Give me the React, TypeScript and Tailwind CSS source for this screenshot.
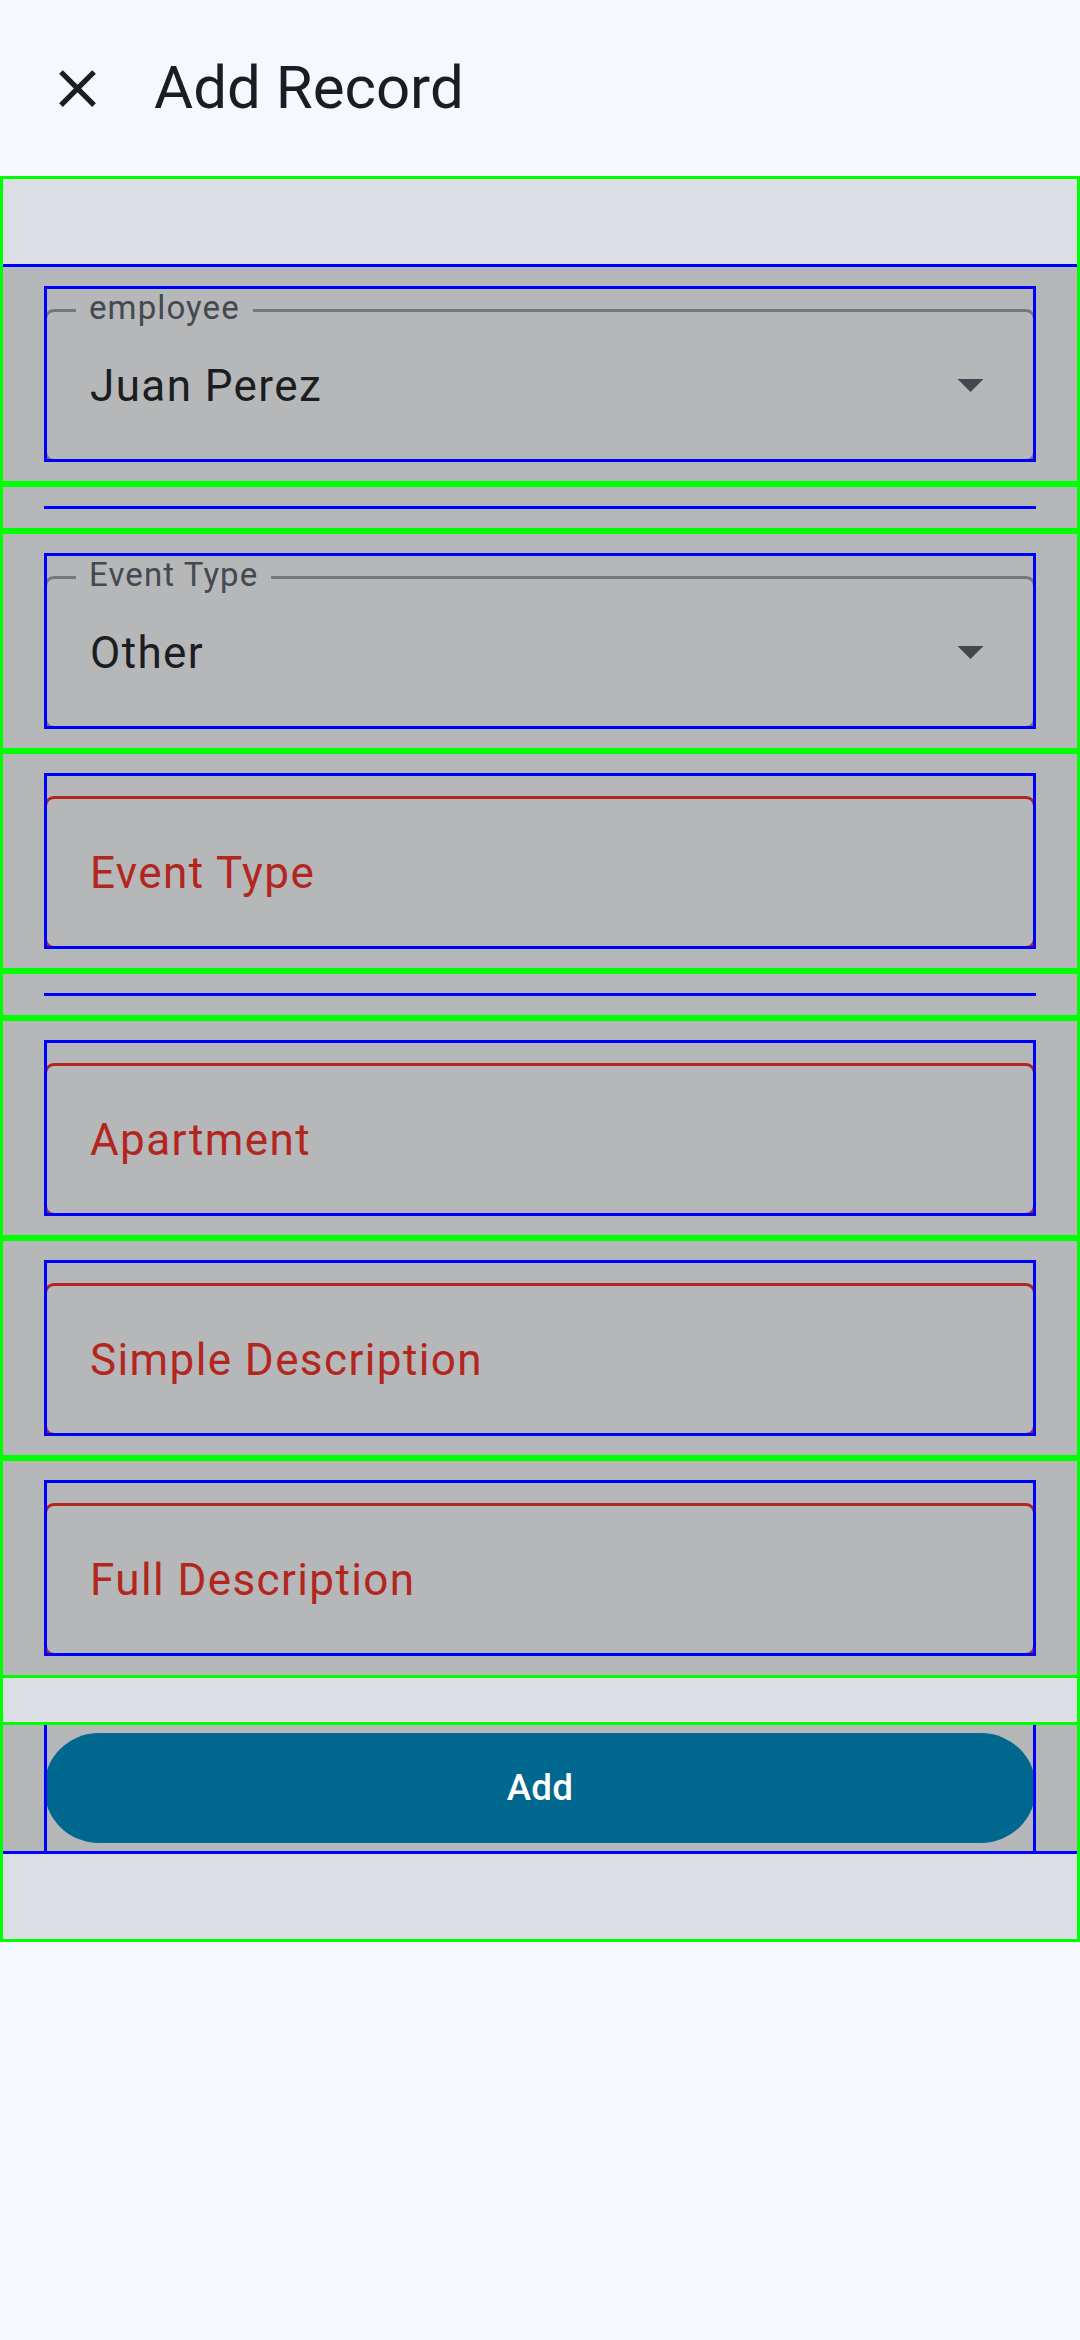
import React from 'react';

function CloseIcon() {
  return (
    <svg viewBox="0 0 24 24" className="h-[63px] w-[63px]" fill="#1b1d21">
      <path d="M19 6.41L17.59 5 12 10.59 6.41 5 5 6.41 10.59 12 5 17.59 6.41 19 12 13.41 17.59 19 19 17.59 13.41 12z" />
    </svg>
  );
}

function OutlinedSelect({ label, value }: { label: string; value: string }) {
  return (
    <div className="relative flex h-[153px] items-center rounded-[10px] border-[3px] border-[#74777c] pl-[43px] pr-[49px]">
      <span className="absolute -top-[21px] left-[29px] bg-[#b6b7b9] px-[13px] text-[33px] leading-none tracking-[1.1px] text-[#44494f]">
        {label}
      </span>
      <span className="flex-1 text-[44px] leading-none tracking-[1.4px] text-[#1b1d20]">{value}</span>
      {/* dropdown arrow */}
      <svg viewBox="0 0 10 5" className="h-[13px] w-[27px]">
        <path d="M0 0l5 5 5-5z" fill="#44474d" />
      </svg>
    </div>
  );
}

function ErrorField({ label }: { label: string }) {
  return (
    <div className="flex h-[153px] items-center rounded-[10px] border-[3px] border-[#b3261e] pl-[43px]">
      <span className="text-[44px] leading-none tracking-[1.4px] text-[#b3261e]">{label}</span>
    </div>
  );
}

// blue debug outline drawn over the field
function Slot({ children }: { children: React.ReactNode }) {
  return (
    <div className="relative pt-[23px]">
      {children}
      <div className="pointer-events-none absolute inset-0 border-[3px] border-[#0000ff]" />
    </div>
  );
}

function Row({ first = false, children }: { first?: boolean; children: React.ReactNode }) {
  return (
    <div
      className={
        first
          ? 'border-b-[3px] border-[#00ff00] bg-[#b6b7b9] px-[41px] py-[19px]'
          : 'border-y-[3px] border-[#00ff00] bg-[#b6b7b9] px-[41px] py-[19px]'
      }
    >
      {children}
    </div>
  );
}

function DividerRow() {
  return (
    <div className="border-y-[3px] border-[#00ff00] bg-[#b6b7b9] px-[41px] py-[19px]">
      <div className="h-[3px] bg-[#0000ff]" />
    </div>
  );
}

export default function App() {
  return (
    <div className="min-h-[2340px] w-[1080px] bg-[#f5f8fe] font-['Roboto',sans-serif]">
      {/* Top bar */}
      <header className="flex h-[176px] items-center">
        <div className="ml-[46px]">
          <CloseIcon />
        </div>
        <h1 className="ml-[45px] text-[60px] leading-none text-[#1b1d21]">Add Record</h1>
      </header>

      {/* Form */}
      <div className="border-[3px] border-[#00ff00] bg-[#dbdee2] py-[85px]">
        <div className="border-y-[3px] border-[#0000ff]">
          <Row first>
            <Slot>
              <OutlinedSelect label="employee" value="Juan Perez" />
            </Slot>
          </Row>
          <DividerRow />
          <Row>
            <Slot>
              <OutlinedSelect label="Event Type" value="Other" />
            </Slot>
          </Row>
          <Row>
            <Slot>
              <ErrorField label="Event Type" />
            </Slot>
          </Row>
          <DividerRow />
          <Row>
            <Slot>
              <ErrorField label="Apartment" />
            </Slot>
          </Row>
          <Row>
            <Slot>
              <ErrorField label="Simple Description" />
            </Slot>
          </Row>
          <Row>
            <Slot>
              <ErrorField label="Full Description" />
            </Slot>
          </Row>

          <div className="h-[44px]" />

          <div className="border-t-[3px] border-[#00ff00] bg-[#b6b7b9] px-[41px]">
            <div className="relative py-[8px]">
              <button className="flex h-[110px] w-full items-center justify-center rounded-full bg-[#00678e] text-[36.75px] font-medium leading-none tracking-[0.3px] text-white">
                Add
              </button>
              <div className="pointer-events-none absolute inset-y-0 left-0 right-0 border-x-[3px] border-[#0000ff]" />
            </div>
          </div>
        </div>
      </div>
    </div>
  );
}
